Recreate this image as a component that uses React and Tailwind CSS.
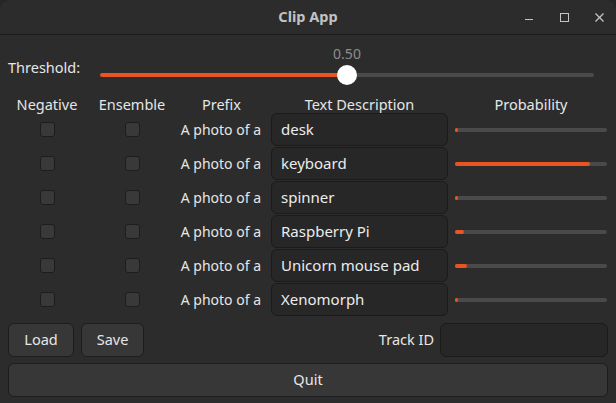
import React from "react";

const rows = [
  { text: "desk", prob: 0.018 },
  { text: "keyboard", prob: 0.885 },
  { text: "spinner", prob: 0.015 },
  { text: "Raspberry Pi", prob: 0.06 },
  { text: "Unicorn mouse pad", prob: 0.08 },
  { text: "Xenomorph", prob: 0.015 },
];

function Checkbox() {
  return (
    <span className="block h-[15px] w-[15px] rounded-[3px] border border-[#1d1d1d] bg-[#393939]" />
  );
}

function ProbBar({ value }) {
  return (
    <div className="h-[4px] w-[152px] rounded-full bg-[#4a4a4a]">
      <div
        className="h-[4px] rounded-full bg-[#e95420]"
        style={{ width: `${Math.max(value * 100, 2)}%` }}
      />
    </div>
  );
}

function WindowControls() {
  return (
    <div className="absolute right-[12px] top-[12px] flex items-center gap-[26px] text-[#c4c4c4]">
      <svg width="9" height="10" viewBox="0 0 9 10">
        <line x1="0" y1="7.5" x2="8" y2="7.5" stroke="currentColor" strokeWidth="1" />
      </svg>
      <svg width="9" height="10" viewBox="0 0 9 10">
        <rect x="0.5" y="1.5" width="8" height="8" fill="none" stroke="currentColor" strokeWidth="1" />
      </svg>
      <svg width="9" height="10" viewBox="0 0 9 10">
        <line x1="0.5" y1="1.5" x2="8.5" y2="9.5" stroke="currentColor" strokeWidth="1.2" />
        <line x1="8.5" y1="1.5" x2="0.5" y2="9.5" stroke="currentColor" strokeWidth="1.2" />
      </svg>
    </div>
  );
}

export default function App() {
  return (
    <div
      className="h-[403px] w-[616px] overflow-hidden bg-[#262626] text-[14.5px] text-[#e6e6e6]"
      style={{ fontFamily: '"Noto Sans", "DejaVu Sans", sans-serif' }}
    >
      <div className="h-full rounded-t-[10px] bg-[#2c2c2c]">
        {/* title bar */}
        <div className="relative flex h-[35px] items-center justify-center border-b border-[#1c1c1c]">
          <span className="text-[14.5px] font-bold text-[#c2c2c2]">Clip App</span>
          <WindowControls />
        </div>

        <div className="px-[8px]">
          {/* threshold slider */}
          <div className="flex h-[59px]">
            <div className="w-[81px] whitespace-nowrap pt-[23px] leading-[18px]">Threshold:</div>
            <div className="flex-1 pt-[10px] pr-[3px]">
              <div className="h-[18px] text-center text-[14px] leading-[18px] text-[#8c8c8c]">0.50</div>
              <div className="relative mx-[11px] flex h-[24px] items-center">
                <div className="h-[4px] w-1/2 rounded-l-full bg-[#e95420]" />
                <div className="h-[4px] w-1/2 rounded-r-full bg-[#4a4a4a]" />
                <span className="absolute left-1/2 top-[2px] h-[20px] w-[20px] -translate-x-1/2 rounded-full bg-white" />
              </div>
            </div>
          </div>

          {/* table */}
          <div className="grid grid-cols-[78px_92px_93px_184px_153px] whitespace-nowrap">
            <div className="h-[19px] pt-[2px] text-center leading-[17px]">Negative</div>
            <div className="h-[19px] pt-[2px] text-center leading-[17px]">Ensemble</div>
            <div className="h-[19px] pr-[6px] pt-[2px] text-center leading-[17px]">Prefix</div>
            <div className="h-[19px] w-[177px] pt-[2px] text-center leading-[17px]">Text Description</div>
            <div className="h-[19px] w-[152px] pt-[2px] text-center leading-[17px]">Probability</div>

            {rows.map((row) => (
              <React.Fragment key={row.text}>
                <div className="mb-[1px] flex h-[33px] items-center justify-center">
                  <Checkbox />
                </div>
                <div className="mb-[1px] flex h-[33px] items-center justify-center">
                  <Checkbox />
                </div>
                <div className="mb-[1px] flex h-[33px] items-center justify-end pr-[10px] text-[14px]">
                  A photo of a
                </div>
                <div className="mb-[1px] flex h-[33px] w-[177px] items-center rounded-[6px] border border-[#1b1b1b] bg-[#272727] pl-[9px] text-[15px] text-[#ececec]">
                  {row.text}
                </div>
                <div className="mb-[1px] flex h-[33px] items-center">
                  <ProbBar value={row.prob} />
                </div>
              </React.Fragment>
            ))}
          </div>

          {/* bottom controls */}
          <div className="mt-[6px] flex h-[34px] items-center">
            <button className="h-[34px] w-[66px] rounded-[6px] border border-[#1d1d1d] bg-[#373737] text-[#e6e6e6]">
              Load
            </button>
            <button className="ml-[7px] h-[34px] w-[63px] rounded-[6px] border border-[#1d1d1d] bg-[#373737] text-[#e6e6e6]">
              Save
            </button>
            <div className="flex-1" />
            <span className="mr-[6px]">Track ID</span>
            <div className="h-[34px] w-[168px] rounded-[6px] border border-[#1b1b1b] bg-[#272727]" />
          </div>

          <button className="mt-[6px] h-[34px] w-full rounded-[6px] border border-[#1d1d1d] bg-[#373737] text-[#e6e6e6]">
            Quit
          </button>
        </div>
      </div>
    </div>
  );
}
